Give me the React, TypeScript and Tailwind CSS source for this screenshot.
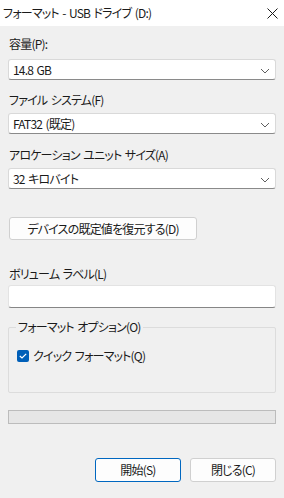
import React from "react";

const font = { fontFamily: '"Noto Sans CJK JP", "Noto Sans", sans-serif' };

const Chevron = () => (
    <svg width="10" height="6" viewBox="0 0 10 6" className="absolute right-[5px] top-[8px]">
        <path d="M1 1 L5 5 L9 1" fill="none" stroke="#5f5f5f" strokeWidth="1" />
    </svg>
);

const Combo = ({ value }: { value: string }) => (
    <div className="relative h-[21px] bg-white border border-[#d9d9d9] border-b-[#8a8a8a] rounded-[3px] text-[12px] leading-[19px] pl-[4px] text-[#1a1a1a]">
        {value}
        <Chevron />
    </div>
);

const Label = ({ children }: { children: React.ReactNode }) => (
    <div className="text-[12px] leading-[16px] text-[#1a1a1a] pl-[1px]">{children}</div>
);

export default function App() {
    return (
        <div
            className="w-[284px] h-[498px] bg-[#f0f0f0] flex flex-col tracking-[-0.8px] [word-spacing:1.5px] [font-feature-settings:'palt']"
            style={font}
        >
            <div className="h-[26px] bg-white flex items-center justify-between pl-[3px] pr-[6px]">
                <span className="text-[12px] text-[#1a1a1a]">フォーマット - USB ドライブ (D:)</span>
                <svg width="11" height="11" viewBox="0 0 11 11">
                    <path d="M0.5 0.5 L10.5 10.5 M10.5 0.5 L0.5 10.5" stroke="#1a1a1a" strokeWidth="1" />
                </svg>
            </div>
            <div className="flex flex-col px-[8px] pt-[10px]">
                <Label>容量(P):</Label>
                <div className="mt-[7px]">
                    <Combo value="14.8 GB" />
                </div>
                <div className="mt-[12px]">
                    <Label>ファイル システム(F)</Label>
                </div>
                <div className="mt-[5px]">
                    <Combo value="FAT32 (既定)" />
                </div>
                <div className="mt-[13px]">
                    <Label>アロケーション ユニット サイズ(A)</Label>
                </div>
                <div className="mt-[5px]">
                    <Combo value="32 キロバイト" />
                </div>
                <button className="mt-[28px] ml-[1px] w-[188px] h-[23px] bg-[#fdfdfd] border border-[#d0d0d0] rounded-[3px] text-[12px] text-[#1a1a1a]">
                    デバイスの既定値を復元する(D)
                </button>
                <div className="mt-[26px]">
                    <Label>ボリューム ラベル(L)</Label>
                </div>
                <div className="mt-[3px] h-[23px] bg-white border border-[#e3e3e3] border-b-[#868686] rounded-[3px]" />
                <div className="mt-[19px] relative h-[66px] border border-[#dcdcdc] rounded-[2px]">
                    <div className="absolute left-[7px] top-[-9px] bg-[#f0f0f0] px-[2px] text-[12px] leading-[16px] text-[#1a1a1a]">
                        フォーマット オプション(O)
                    </div>
                    <div className="flex items-center mt-[20px] ml-[8px] gap-[4px]">
                        <div className="w-[12px] h-[12px] rounded-[2px] bg-[#005fb8] flex items-center justify-center">
                            <svg width="8" height="6" viewBox="0 0 8 6">
                                <path d="M0.8 3 L3 5 L7.2 0.8" fill="none" stroke="white" strokeWidth="1.2" />
                            </svg>
                        </div>
                        <span className="text-[12px] leading-[16px] text-[#1a1a1a]">クイック フォーマット(Q)</span>
                    </div>
                </div>
                <div className="mt-[17px] h-[14px] bg-[#e6e6e6] border border-[#bcbcbc]" />
                <div className="mt-[34px] flex justify-end gap-[9px]">
                    <button className="w-[86px] h-[24px] bg-[#fdfdfd] border border-[#0067c0] rounded-[3px] text-[12px] text-[#1a1a1a]">
                        開始(S)
                    </button>
                    <button className="w-[86px] h-[24px] bg-[#fdfdfd] border border-[#d0d0d0] rounded-[3px] text-[12px] text-[#1a1a1a]">
                        閉じる(C)
                    </button>
                </div>
            </div>
        </div>
    );
}
